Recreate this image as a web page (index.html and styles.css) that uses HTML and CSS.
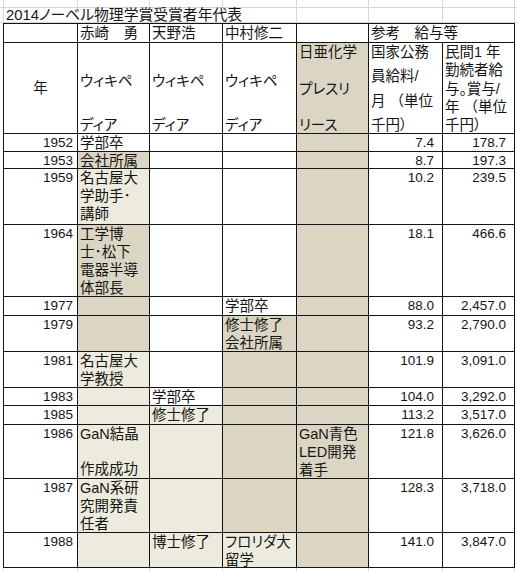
FILE: index.html
```html
<!DOCTYPE html>
<html lang="ja">
<head>
<meta charset="utf-8">
<title>2014ノーベル物理学賞受賞者年代表</title>
<link rel="stylesheet" href="styles.css">
</head>
<body>
<div class="pre">
  <div></div><div></div><div></div><div></div><div></div><div></div><div></div><div></div><div></div>
  <div></div>
  <div class="title">2014ノーベル物理学賞受賞者年代表</div>
  <div></div><div></div><div></div><div></div><div></div>
</div>
<div class="wrap">
<div class="grid">
  <div class="c"></div>
  <div class="c">赤崎　勇</div>
  <div class="c">天野浩</div>
  <div class="c">中村修二</div>
  <div class="c"></div>
  <div class="c span2">参考　給与等</div>

  <div class="c center">年</div>
  <div class="c dist"><span></span><span>ウィキペ</span><span>ディア</span></div>
  <div class="c dist"><span></span><span>ウィキペ</span><span>ディア</span></div>
  <div class="c dist"><span></span><span>ウィキペ</span><span>ディア</span></div>
  <div class="c dist t"><span>日亜化学</span><span>プレスリ</span><span>リース</span></div>
  <div class="c dist"><span>国家公務</span><span>員給料/</span><span>月 <span class="np">（</span>単位</span><span>千円）</span></div>
  <div class="c dist"><span>民間1 年</span><span>勤続者給</span><span>与。賞与/</span><span>年 <span class="np">（</span>単位</span><span>千円）</span></div>

  <div class="c n">1952</div>
  <div class="c">学部卒</div>
  <div class="c"></div>
  <div class="c"></div>
  <div class="c t"></div>
  <div class="c n pay">7.4</div>
  <div class="c n pay">178.7</div>

  <div class="c n">1953</div>
  <div class="c t">会社所属</div>
  <div class="c"></div>
  <div class="c"></div>
  <div class="c t"></div>
  <div class="c n pay">8.7</div>
  <div class="c n pay">197.3</div>

  <div class="c n">1959</div>
  <div class="c g">名古屋大<br>学助手･<br>講師</div>
  <div class="c"></div>
  <div class="c"></div>
  <div class="c t"></div>
  <div class="c n pay">10.2</div>
  <div class="c n pay">239.5</div>

  <div class="c n">1964</div>
  <div class="c t">工学博<br>士･松下<br>電器半導<br>体部長</div>
  <div class="c"></div>
  <div class="c"></div>
  <div class="c t"></div>
  <div class="c n pay">18.1</div>
  <div class="c n pay">466.6</div>

  <div class="c n">1977</div>
  <div class="c t"></div>
  <div class="c"></div>
  <div class="c">学部卒</div>
  <div class="c t"></div>
  <div class="c n pay">88.0</div>
  <div class="c n pay">2,457.0</div>

  <div class="c n">1979</div>
  <div class="c t"></div>
  <div class="c"></div>
  <div class="c t">修士修了<br>会社所属</div>
  <div class="c t"></div>
  <div class="c n pay">93.2</div>
  <div class="c n pay">2,790.0</div>

  <div class="c n">1981</div>
  <div class="c g">名古屋大<br>学教授</div>
  <div class="c"></div>
  <div class="c t"></div>
  <div class="c t"></div>
  <div class="c n pay">101.9</div>
  <div class="c n pay">3,091.0</div>

  <div class="c n">1983</div>
  <div class="c g"></div>
  <div class="c">学部卒</div>
  <div class="c t"></div>
  <div class="c t"></div>
  <div class="c n pay">104.0</div>
  <div class="c n pay">3,292.0</div>

  <div class="c n">1985</div>
  <div class="c g"></div>
  <div class="c g">修士修了</div>
  <div class="c t"></div>
  <div class="c t"></div>
  <div class="c n pay">113.2</div>
  <div class="c n pay">3,517.0</div>

  <div class="c n">1986</div>
  <div class="c g dist2"><span>GaN結晶</span><span>作成成功</span></div>
  <div class="c g"></div>
  <div class="c t"></div>
  <div class="c t">GaN青色<br>LED開発<br>着手</div>
  <div class="c n pay">121.8</div>
  <div class="c n pay">3,626.0</div>

  <div class="c n">1987</div>
  <div class="c g">GaN系研<br>究開発責<br>任者</div>
  <div class="c g"></div>
  <div class="c t"></div>
  <div class="c t"></div>
  <div class="c n pay">128.3</div>
  <div class="c n pay">3,718.0</div>

  <div class="c n">1988</div>
  <div class="c g"></div>
  <div class="c g">博士修了</div>
  <div class="c g">フロリダ大<br>留学</div>
  <div class="c t"></div>
  <div class="c n pay">141.0</div>
  <div class="c n pay">3,847.0</div>
</div>
</div>
<div class="post">
  <div></div><div></div><div></div><div></div><div></div><div></div><div></div><div></div><div></div>
</div>
</body>
</html>
```

FILE: styles.css
```css
html, body {
  margin: 0;
  padding: 0;
  background: #fff;
}

body {
  width: 517px;
  height: 571px;
  overflow: hidden;
  font-family: "Liberation Sans", "Noto Sans CJK JP", sans-serif;
  font-size: 14.5px;
  color: #151515;
  font-feature-settings: "palt";
}

.pre,
.post {
  display: grid;
  grid-template-columns: 3px 73px 71px 72px 73px 71px 73px 71px 2px;
  gap: 1px;
  background: #d7d7d7;
}

.pre {
  grid-template-rows: 7px 14px;
}

.post {
  grid-template-rows: 5px;
}

.pre > div,
.post > div {
  background: #fff;
}

.title {
  grid-column: 2 / 6;
  padding-left: 2px;
  line-height: 15px;
  font-size: 14.8px;
  white-space: nowrap;
}

.wrap {
  padding-left: 3px;
  background: #fff;
}

.grid {
  display: grid;
  width: max-content;
  grid-template-columns: 73px 71px 72px 73px 71px 73px 71px;
  grid-template-rows: 18px 90px 17px 16px 55px 71px 18px 35px 35px 17px 18px 53px 53px 34px;
  gap: 1px;
  padding: 1px;
  background: #141414;
}

.c {
  background: #fff;
  padding: 0 2px;
  line-height: 18px;
  white-space: nowrap;
  overflow: hidden;
}

.span2 {
  grid-column: span 2;
}

.n {
  text-align: right;
  padding-right: 4px;
  font-size: 13.5px;
}

.pay {
  padding-right: 8px;
}

.t {
  background: #dbd6c3;
}

.g {
  background: #ecebdd;
}

.np {
  font-feature-settings: normal;
}

.center {
  display: flex;
  align-items: center;
  justify-content: center;
}

.dist,
.dist2 {
  display: flex;
  flex-direction: column;
  justify-content: space-between;
}

.dist {
  line-height: 15px;
  padding-top: 2px;
}

.dist2 {
  line-height: 18px;
}
```
